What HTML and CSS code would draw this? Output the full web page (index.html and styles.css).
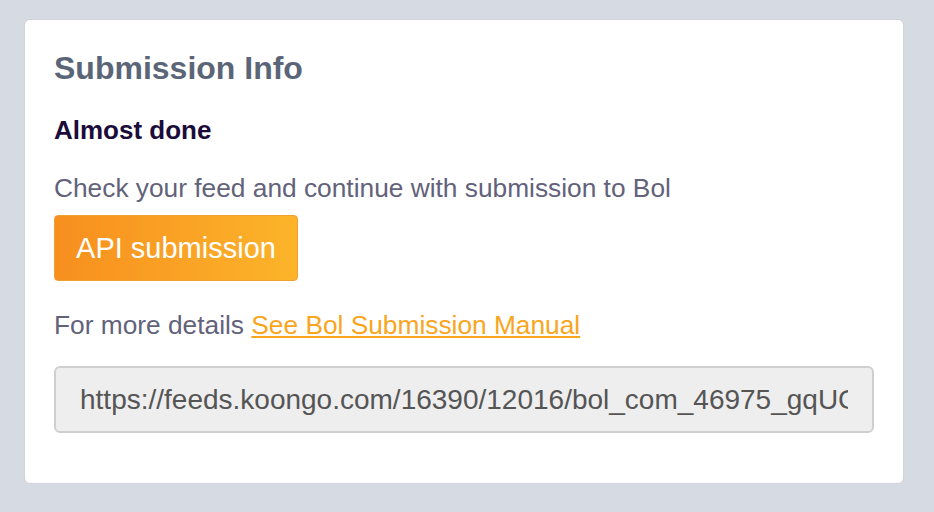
FILE: index.html
```html
<!DOCTYPE html>
<html lang="en">
<head>
<meta charset="utf-8">
<title>Submission Info</title>
<link rel="stylesheet" href="styles.css">
</head>
<body>
<div class="page">
  <section class="card">
    <h2 class="card-title">Submission Info</h2>
    <h3 class="status">Almost done</h3>
    <p class="desc">Check your feed and continue with submission to Bol</p>
    <button class="btn-api" type="button">API submission</button>
    <p class="details">For more details <a class="manual-link" href="#">See Bol Submission Manual</a></p>
    <div class="feed-url"><div class="feed-url-text">https://feeds.koongo.com/16390/12016/bol_com_46975_gqUC8dLx2k.xml</div></div>
  </section>
</div>
</body>
</html>
```
FILE: styles.css
```css
html, body {
  margin: 0;
  padding: 0;
  background: #d6dae2;
}
body {
  font-family: "Liberation Sans", Arial, sans-serif;
}
.page {
  padding: 19px 30px 28px 24px;
}
.card {
  background: #ffffff;
  border: 1px solid #cfd3da;
  border-radius: 6px;
  padding: 28px 29px 50px 29px;
  display: flex;
  flex-direction: column;
  align-items: flex-start;
}
.card-title {
  margin: 0;
  font-size: 32px;
  font-weight: bold;
  color: #5b6578;
  line-height: 40px;
}
.status {
  margin: 26px 0 0 0;
  font-size: 26px;
  font-weight: bold;
  color: #1b0c3a;
  line-height: 32px;
}
.desc {
  margin: 26px 0 0 0;
  font-size: 26.3px;
  color: #62627a;
  line-height: 32px;
}
.btn-api {
  margin-top: 11px;
  width: 244px;
  height: 66px;
  border: 1px solid #f0a030;
  border-radius: 4px;
  background: linear-gradient(90deg, #f78f1e 0%, #fcb42a 100%);
  color: #ffffff;
  font-family: "Liberation Sans", Arial, sans-serif;
  font-size: 29px;
  padding: 0;
}
.details {
  margin: 28px 0 0 0;
  font-size: 26.3px;
  color: #62627a;
  line-height: 32px;
}
.manual-link {
  color: #f9a51e;
  text-decoration: underline;
}
.feed-url {
  margin-top: 25px;
  box-sizing: border-box;
  align-self: stretch;
  height: 67px;
  border: 2px solid #cfcfcf;
  border-radius: 6px;
  background: #eeeeee;
  padding: 0 24px;
  display: flex;
  align-items: center;
}
.feed-url-text {
  flex: 1;
  min-width: 0;
  overflow: hidden;
  white-space: nowrap;
  font-size: 28px;
  line-height: 32px;
  color: #555555;
}
```
